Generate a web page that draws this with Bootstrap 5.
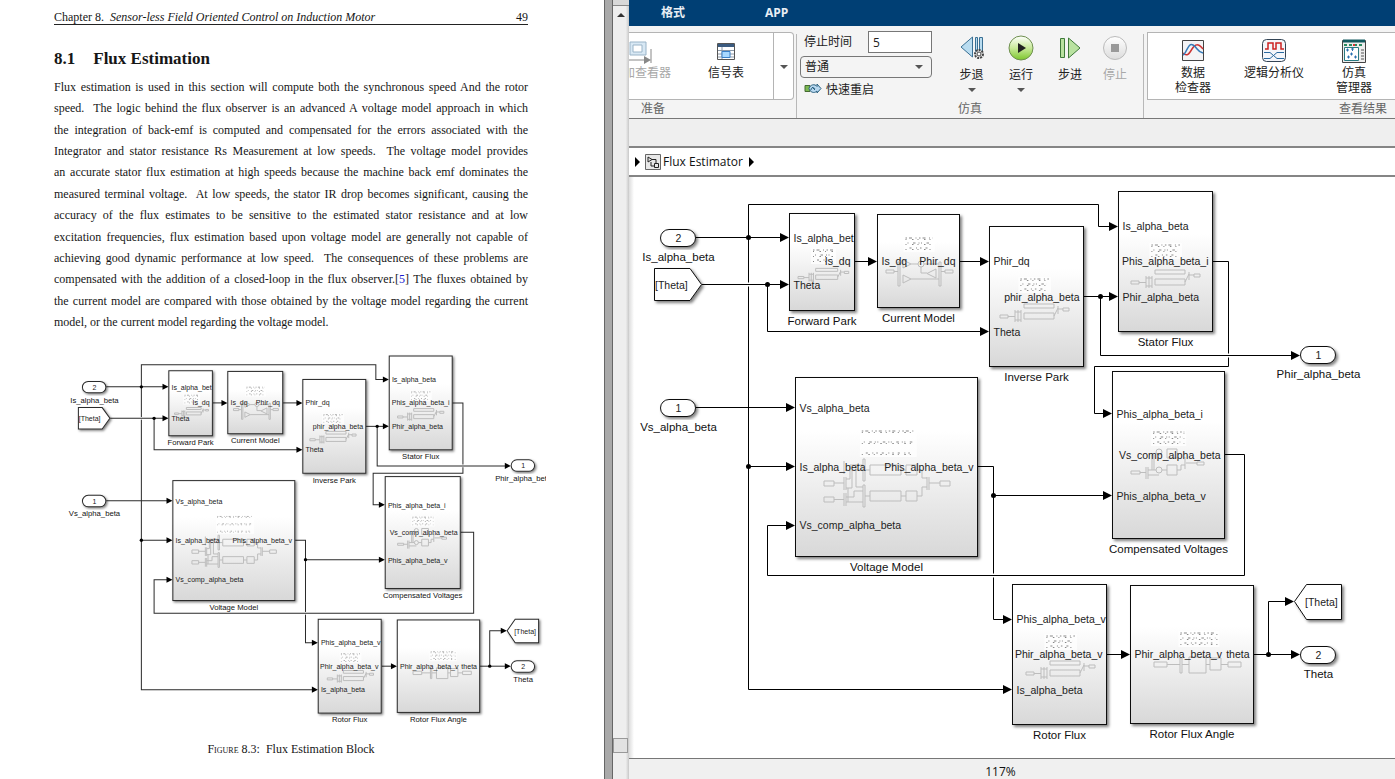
<!DOCTYPE html>
<html lang="zh-CN">
<head>
<meta charset="utf-8">
<meta name="viewport" content="width=device-width, initial-scale=1">
<title>Flux Estimator</title>
<link rel="stylesheet" href="https://cdn.jsdelivr.net/npm/bootstrap@5.3.0/dist/css/bootstrap.min.css">
<style>
  body { font-family: "Open Sans", "Noto Sans CJK SC", sans-serif; font-size: 12px; line-height: 16px; color: #222; background: #fff; }
  .split { display: grid; grid-template-columns: 604fr 791fr; height: 100vh; }
  .pane { min-width: 0; }

  /* document pane */
  .paper { font-family: "Liberation Serif", serif; color: #161616; min-width: 0; }
  .paper-text { padding: 10px 76px 0 54px; }
  .running-head { font-size: 12px; line-height: 14px; border-bottom: 1px solid #222; }
  .paper h1 { font-size: 17px; line-height: 20px; font-weight: 700; margin: 24px 0 8px; gap: 18px; }
  .prose { font-size: 12px; line-height: 1.78; }
  .prose span { display: block; text-align: justify; text-align-last: justify; white-space: nowrap; }
  .prose span:last-child { text-align-last: left; }
  .prose a { color: #1a1ad0; text-decoration: none; }
  .paper figure { padding: 20px 58px 0 66px; }
  .paper figcaption { font-size: 12px; line-height: 16px; margin: 14px 30px 0 0; text-align: center; }
  .caps { font-variant: small-caps; }
  .gutter { width: 8px; background: #a9a9a9; border-left: 1px solid #666; }
  .scroller { width: 17px; background: linear-gradient(90deg, #eee 80%, #c8c8c8); border-left: 1px solid #666; }
  .scroll-cap { height: 6px; background: #d8d8d8; border-bottom: 1px solid #888; }
  .scroll-thumb { height: 15px; margin: 0 1px 26px 0; background: #e2e2e2; border: 1px solid #999; }

  /* model window */
  .tabbar { height: 26px; background: #003f74; }
  .tabbar a { color: #e8eef4; font-weight: 700; text-decoration: none; }
  .ribbon { height: 93px; background: #f4f4f4; border-bottom: 1px solid #777; }
  .gallery { height: 69px; margin-top: 6px; background: #fff; border: 1px solid #b4b4b4; }
  .gallery-left { width: 165px; margin-right: 2px; border-left: 0; border-radius: 0 4px 4px 0; }
  .group-rule { border-left: 1px solid #b8b8b8; margin-top: 8px; }
  .sim-group { width: 346px; }
  .sim-body { height: 75px; }
  .sim-form { width: 139px; padding: 5px 4px 0 3px; gap: 3px; }
  .sim-tools { padding: 6px 0 0 11px; }
  .view-group { min-width: 0; padding-left: 3px; }
  .tool { border: 0; background: none; padding: 0; color: #222; line-height: 15px; display: flex; flex-direction: column; align-items: center; white-space: nowrap; }
  .tool:disabled { color: #a8a8a8; }
  .tool svg { display: block; }
  .group-name { color: #666; line-height: 18px; }
  .stop-time { width: 64px; height: 22px; border: 1px solid #777; padding: 0 4px; background: #fff; color: #222; }
  .mode { width: 132px; height: 22px; border: 1px solid #777; border-radius: 4px; padding: 0 4px; color: #222; appearance: none;
    background: #f4f4f4 url("data:image/svg+xml,%3Csvg xmlns='http://www.w3.org/2000/svg' width='8' height='4'%3E%3Cpath d='M0 0h8l-4 4z' fill='%23555'/%3E%3C/svg%3E") no-repeat right 8px center; }
  .drop-cell { width: 20px; border: 0; border-left: 1px solid #b4b4b4; background: none; padding: 0; }
  .substrip { height: 27px; background: #efefef; }
  .crumbs { height: 31px; border-top: 2px solid #858585; border-bottom: 2px solid #858585; background: #fff; }
  .crumbs a { color: #111; text-decoration: none; padding: 0 4px 0 2px; }
  .canvas-area { background: linear-gradient(90deg, #ddd, #fff 5px); min-height: 0; }
  .statusbar { height: 21px; border-top: 1px solid #777; background: #f0f0f0; padding-left: 46.5%; line-height: 26px; color: #111; }

  /* block diagram */
  .diagram { display: block; width: 100%; font-family: "Liberation Sans", sans-serif; }
  .diagram .wire { fill: none; stroke: #000; stroke-width: 2; }
  .diagram .shell { stroke: #111; stroke-width: 2; filter: url(#cast); }
  .diagram .port-name { font-size: 21px; fill: #222; }
  .diagram .block-name { font-size: 23px; fill: #111; text-anchor: middle; }
  .diagram .ghost { fill: none; stroke: #bdbdbd; stroke-width: 1; }
  .diagram .speck { fill: none; stroke: #888; stroke-width: 2; }
  .paper .diagram .wire, .paper .diagram .shell { stroke: #2b2b2b; stroke-width: 3; }
</style>
</head>
<body class="overflow-hidden">
<svg width="0" height="0" class="position-absolute" aria-hidden="true">
  <defs>
    <linearGradient id="face" x1="0" y1="0" x2="0" y2="1"><stop offset=".3" stop-color="#fff"/><stop offset="1" stop-color="#d8d8d8"/></linearGradient>
    <linearGradient id="run" x1="0" y1="0" x2="0" y2="1"><stop offset="0" stop-color="#fff"/><stop offset=".5" stop-color="#c9ea9a"/><stop offset="1" stop-color="#7cc62c"/></linearGradient>
    <linearGradient id="off" x1="0" y1="0" x2="0" y2="1"><stop offset="0" stop-color="#fff"/><stop offset="1" stop-color="#dcdcdc"/></linearGradient>
    <filter id="cast" x="-10%" y="-10%" width="125%" height="130%"><feDropShadow dx="4" dy="4" stdDeviation="3" flood-color="#000" flood-opacity=".5"/></filter>
  </defs>
</svg>

<main class="split">
  <section class="pane d-flex overflow-hidden">
    <article class="paper flex-grow-1">
      <div class="paper-text">
        <header class="running-head d-flex justify-content-between"><span>Chapter 8.&ensp;<i>Sensor-less Field Oriented Control on Induction Motor</i></span><span>49</span></header>
        <h1 class="d-flex"><span>8.1</span><span>Flux Estimation</span></h1>
        <p class="prose mb-0">
          <span>Flux estimation is used in this section will compute both the synchronous speed And the rotor</span>
          <span>speed.&nbsp; The logic behind the flux observer is an advanced A voltage model approach in which</span>
          <span>the integration of back-emf is computed and compensated for the errors associated with the</span>
          <span>Integrator and stator resistance Rs Measurement at low speeds.&nbsp; The voltage model provides</span>
          <span>an accurate stator flux estimation at high speeds because the machine back emf dominates the</span>
          <span>measured terminal voltage.&nbsp; At low speeds, the stator IR drop becomes significant, causing the</span>
          <span>accuracy of the flux estimates to be sensitive to the estimated stator resistance and at low</span>
          <span>excitation frequencies, flux estimation based upon voltage model are generally not capable of</span>
          <span>achieving good dynamic performance at low speed.&nbsp; The consequences of these problems are</span>
          <span>compensated with the addition of a closed-loop in the flux observer.[<a href="#ref5">5</a>] The fluxes obtained by</span>
          <span>the current model are compared with those obtained by the voltage model regarding the current</span>
          <span>model, or the current model regarding the voltage model.</span>
        </p>
      </div>
      <figure class="mb-0">
        <svg class="diagram" viewBox="1272 374 1433 1116" role="img" aria-label="Flux estimation block diagram"></svg>
        <figcaption><span class="caps">Figure</span> 8.3:&ensp;Flux Estimation Block</figcaption>
      </figure>
    </article>
  </section>

  <section class="pane d-flex">
    <div class="gutter flex-shrink-0"></div>
    <div class="scroller d-flex flex-column flex-shrink-0">
      <div class="scroll-cap"></div>
      <svg width="16" height="18" viewBox="0 0 16 18"><path d="M4 11l4-4 4 4z" fill="#333"/></svg>
      <div class="scroll-thumb mt-auto"></div>
    </div>

    <div class="pane d-flex flex-column flex-grow-1">
      <nav class="tabbar d-flex align-items-center flex-shrink-0"><a href="#format" class="ps-4 ms-2 pe-5">格式</a><a href="#app" class="ps-4 ms-2">APP</a></nav>

      <div class="ribbon d-flex flex-shrink-0 overflow-hidden">
        <div class="d-flex flex-column flex-shrink-0">
          <div class="gallery gallery-left d-flex">
            <div class="overflow-hidden d-flex justify-content-end" style="width:42px">
              <button class="tool pt-1" disabled>
                <svg width="30" height="28" viewBox="0 0 30 28"><path d="M4 5h16v13H4z" fill="#d8e8f4" stroke="#9ab4c8"/><path d="M7 8h9v7H7z" fill="#fff" stroke="#9ab4c8"/><path d="M2 18v5h18M25 12v14" fill="none" stroke="#888"/><path d="M18 19l7 4-7 4z" fill="#888"/></svg>
                <span>添加查看器</span>
              </button>
            </div>
            <button class="tool flex-grow-1 pt-1 ps-2"><svg width="18" height="28" viewBox="0 0 18 28"><path d="M.5 6.500h17v16H.5z" fill="#fff" stroke="#555"/><path d="M1 7h16v3H1z" fill="#3b5b80"/><path d="M1 13.500h16M1 17h16M1 20h16M5 10v12" stroke="#8a98a8"/><path d="M5 14.500h8v6H5z" fill="#a8d8ff" stroke="#3a80c8"/></svg><span>信号表</span></button>
            <button class="drop-cell" aria-label="更多"><svg width="8" height="4"><path d="M0 0h8l-4 4z" fill="#555"/></svg></button>
          </div>
          <span class="group-name ps-2 ms-1">准备</span>
        </div>

        <div class="group-rule flex-shrink-0"></div>
        <div class="sim-group d-flex flex-column flex-shrink-0">
          <div class="sim-body d-flex">
            <div class="sim-form d-flex flex-column">
              <div class="d-flex align-items-center justify-content-between flex-shrink-0"><label for="stop" class="ps-1">停止时间</label><input id="stop" class="stop-time" value="5"></div>
              <select class="mode flex-shrink-0" aria-label="仿真模式"><option>普通</option></select>
              <button class="tool flex-row gap-1 ps-1 flex-shrink-0"><svg width="18" height="16" viewBox="0 0 18 16"><path d="M1 4.500h5v6H1z" fill="#7cb850" stroke="#456a30"/><path d="M5 7.500c1-4 6-5 8-2V3l4 4.500L13 12v-2c-3 3-7 1-8-2.500z" fill="#b8d8f0" stroke="#2a6080"/><path d="M7 9c0-3 3-3 4-1M8 6l3 3" fill="none" stroke="#2a6080"/></svg>快速重启</button>
            </div>
            <div class="sim-tools d-flex">
              <button class="tool" style="width:49px"><svg width="28" height="35" viewBox="0 0 28 35"><path d="M14.500 5v20L3 15z" fill="#b9dcf0" stroke="#3a7094"/><path d="M17.500 5.500h2v17h-2zM21.500 5.500h3v14h-3z" fill="#b9dcf0" stroke="#3a7094"/><circle cx="21" cy="22" r="4" fill="#eee" stroke="#444" stroke-width="2" stroke-dasharray="2 1"/><circle cx="21" cy="22" r="2" fill="#fff" stroke="#444"/></svg><span>步退</span><svg width="8" height="12"><path d="M0 6h8l-4 4z" fill="#555"/></svg></button>
              <button class="tool" style="width:50px"><svg width="26" height="35" viewBox="0 0 26 35"><circle cx="13" cy="16" r="12" fill="url(#run)" stroke="#6f8f50"/><path d="M10 11v10l8-5z" fill="#222"/></svg><span>运行</span><svg width="8" height="12"><path d="M0 6h8l-4 4z" fill="#555"/></svg></button>
              <button class="tool" style="width:48px"><svg width="24" height="35" viewBox="0 0 24 35"><path d="M2.500 6.500h4v19h-4zM10.500 6v20L22 16z" fill="#b9e2a0" stroke="#3f7a3a"/></svg><span>步进</span></button>
              <button class="tool" style="width:42px" disabled><svg width="26" height="35" viewBox="0 0 26 35"><circle cx="13" cy="16" r="11.500" fill="url(#off)" stroke="#bbb"/><path d="M9 12h8v8H9z" fill="#999"/></svg><span>停止</span></button>
            </div>
          </div>
          <span class="group-name text-center">仿真</span>
        </div>

        <div class="group-rule flex-shrink-0"></div>
        <div class="view-group d-flex flex-column flex-grow-1">
          <div class="gallery border-end-0 d-flex">
            <button class="tool pt-1 flex-shrink-0" style="width:90px"><svg width="24" height="28" viewBox="0 0 24 28"><path d="M1.500 3.500h21v20h-21z" fill="#f4f4f6" stroke="#444"/><path d="M2 16c4 4 6 1 9-4s6-6 11 0" fill="none" stroke="#c33" stroke-width="1.500"/><path d="M2 18c4-2 5-13 10-10s4 7 10 8" fill="none" stroke="#357ab8" stroke-width="1.500"/></svg><span>数据<br>检查器</span></button>
            <button class="tool pt-1 flex-shrink-0" style="width:72px"><svg width="26" height="28" viewBox="0 0 26 28"><rect x="1.500" y="2.500" width="23" height="22" rx="4" fill="#f4f6fa" stroke="#345"/><path d="M4 12h3V6h5v6h3V6h5v6h3" fill="none" stroke="#c22" stroke-width="1.500"/><path d="M3 15.500h6l7 6h7M3 21.500h6l7-6h7" fill="none" stroke="#2a6aa0"/></svg><span>逻辑分析仪</span></button>
            <button class="tool pt-1 flex-shrink-0" style="width:88px"><svg width="26" height="28" viewBox="0 0 26 28"><path d="M1.500 3.500h23v22h-23z" fill="#eee" stroke="#444"/><path d="M2 4h22" stroke="#145a60" stroke-width="3"/><path d="M3 8h20" stroke="#2a8a60" stroke-width="2" stroke-dasharray="3 2"/><path d="M12 8h2" stroke="#d33" stroke-width="2"/><path d="M3.500 10.500h14v13h-14z" fill="#fff" stroke="#2a7a80"/><path d="M5 13h3M6.500 11.500v3M10 12h3M11.500 11v3M9 17h3M10.500 15.500v3M6 20h3M7.500 18.500v3M13 20h3M14.500 18.500v3" stroke="#2a70b0"/><path d="M20 13h3M20 16h3M20 19h3M20 22h3" stroke="#555"/></svg><span>仿真<br>管理器</span></button>
          </div>
          <span class="group-name text-end pe-2">查看结果</span>
        </div>
      </div>

      <div class="substrip flex-shrink-0"></div>
      <nav class="crumbs d-flex align-items-center flex-shrink-0 ps-1">
        <svg width="12" height="12"><path d="M2 1v10l5-5z"/></svg>
        <svg width="16" height="16" viewBox="0 0 16 16"><path d="M.5.5h15v15H.5z" fill="#e8e8e8" stroke="#666"/><path d="M3 3v5l4-2.500zM7 5.500h4v4M9.500 9.500h4v4h-4zM9.500 12H6V8" fill="none" stroke="#222"/></svg>
        <a href="#flux">Flux Estimator</a>
        <svg width="12" height="12"><path d="M2 1v10l5-5z"/></svg>
      </nav>
      <div class="canvas-area flex-grow-1 overflow-hidden">
        <svg class="diagram h-100" viewBox="1258 354 1532 1162" preserveAspectRatio="xMinYMin meet" role="img" aria-label="Flux Estimator model"></svg>
      </div>
      <footer class="statusbar flex-shrink-0">117%</footer>
    </div>
  </section>
</main>

<script src="https://cdn.jsdelivr.net/npm/bootstrap@5.3.0/dist/js/bootstrap.bundle.min.js"></script>
<script>
// One grid step of the model is two units of the drawing.
const u = n => n * 2;
const pts = a => a.map(p => u(p[0]) + ',' + u(p[1])).join(' ');

const blocks = [
  { name: 'Forward Park', box: [789.5, 213.5, 65, 97], left: [['Is_alpha_bet', 238], ['Theta', 285]], right: [['Is_dq', 261.5]], art: [798, 250, 50, 'bar'] },
  { name: 'Current Model', box: [877.5, 214.5, 82, 93], left: [['Is_dq', 261]], right: [['Phir_dq', 261]], art: [886, 238, 65, 'gain'] },
  { name: 'Inverse Park', box: [989.5, 226.5, 94, 140], left: [['Phir_dq', 261.5], ['Theta', 332]], right: [['phir_alpha_beta', 297]], art: [1000, 279, 68, 'bar'] },
  { name: 'Stator Flux', box: [1118.5, 191.5, 94, 140], left: [['Is_alpha_beta', 226.5], ['Phir_alpha_beta', 297]], right: [['Phis_alpha_beta_i', 261.5]], art: [1131, 245, 68, 'bar'] },
  { name: 'Compensated Voltages', box: [1112.5, 371.5, 112, 167], left: [['Phis_alpha_beta_i', 414.5], ['Phis_alpha_beta_v', 496.5]], right: [['Vs_comp_alpha_beta', 455.5]], art: [1131, 432, 74, 'sum'] },
  { name: 'Voltage Model', box: [795.5, 377.5, 182, 179], left: [['Vs_alpha_beta', 408.5], ['Is_alpha_beta', 467.5], ['Vs_comp_alpha_beta', 525.5]], right: [['Phis_alpha_beta_v', 467.5]], art: [824, 431, 126, 'model'] },
  { name: 'Rotor Flux', box: [1012.5, 584.5, 94, 140], left: [['Phis_alpha_beta_v', 619.5], ['Is_alpha_beta', 690]], right: [['Phir_alpha_beta_v', 654.5]], art: [1026, 636, 68, 'bar'] },
  { name: 'Rotor Flux Angle', box: [1130.5, 585.5, 123, 138], left: [['Phir_alpha_beta_v', 654.5]], right: [['theta', 654.5]], art: [1154, 633, 88, 'angle'] }
];

const ports = [
  { n: 2, at: [678.5, 238], name: 'Is_alpha_beta' }, { n: 1, at: [678.5, 408], name: 'Vs_alpha_beta' },
  { n: 1, at: [1318.5, 355], name: 'Phir_alpha_beta' }, { n: 2, at: [1318.5, 655], name: 'Theta' }
];

// each entry: the corner points, then where another wire is crossed with a small break
const wires = [
  [[[748.5, 237.5], [748.5, 204.5], [1098.5, 204.5], [1098.5, 226.5], [1118, 226.5]]],
  [[[748.5, 237.5], [748.5, 689.5], [1012, 689.5]]],
  [[[1212.5, 261.5], [1228.5, 261.5], [1228.5, 366.5], [1094.5, 366.5], [1094.5, 413.5], [1112, 413.5]]],
  [[[993.5, 495.5], [993.5, 619.5], [1012, 619.5]]],
  [[[696, 237.5], [789, 237.5]]],
  [[[702, 284.5], [789, 284.5]], [748.5, 284.5]],
  [[[767.5, 284.5], [767.5, 331.5], [989, 331.5]]],
  [[[855, 261.5], [877, 261.5]]],
  [[[960, 261.5], [989, 261.5]]],
  [[[1083.5, 296.5], [1118, 296.5]]],
  [[[1100.5, 296.5], [1100.5, 355.5], [1300, 355.5]], [1228.5, 355.5]],
  [[[696, 407.5], [795, 407.5]]],
  [[[748.5, 466.5], [795, 466.5]]],
  [[[978, 466.5], [993.5, 466.5], [993.5, 495.5], [1112, 495.5]]],
  [[[1224.5, 454.5], [1244.5, 454.5], [1244.5, 575.5], [767.5, 575.5], [767.5, 525.5], [795, 525.5]], [993.5, 575.5]],
  [[[1107, 654.5], [1130, 654.5]]],
  [[[1253.5, 654.5], [1300, 654.5]]],
  [[[1268.5, 654.5], [1268.5, 601.5], [1294, 601.5]]]
];
const dots = [[748.5, 237.5], [767.5, 284.5], [1100.5, 296.5], [748.5, 466.5], [993.5, 495.5], [1268.5, 654.5]];

const ghosts = {
  bar: 'M0 36h8v3h-8zM8 37.500h7M15 31v12M18 31v12M21 31v12M15 33h6M15 41h6M24 34h30v6h-30zM54 37l4-8M58 27v8M58 30h5M63 29h6v3h-6zM24 25h30v4h-30z',
  gain: 'M0 32h8v3h-8zM8 33.500h4M12 24h2v24h-2zM17 22v8l8-4zM25 26h7M35 26m-3 0a3 3 0 106 0a3 3 0 10-6 0M17 37v8l8-4zM25 41h28M53 24h2v24h-2zM50 31v9l-9-4.500zM41 35h-6v-6M38 26h15M55 33.500h4M59 32h8v3h-8z',
  sum: 'M0 39h9v3h-9zM9 40.500h6M15 35v12M17 35v12M17 38h8M28 38m-3 0a3 3 0 106 0a3 3 0 10-6 0M17 43h11M31 38h5M36 33h10v10h-10zM46 38h4v-5h4M54 25v12M55 31h11M66 30h7v3h-7zM36 17h10v9h-10zM28 20m-3 0a3 3 0 106 0a3 3 0 10-6 0M21 38v-15M23 38v-15',
  model: 'M0 50h10v5h-10zM10 52h10M0 66h10v5h-10zM10 68.500h10M20 46v13M22 46v13M20 62v13M22 62v13M20 30v13M39 28v22h2v-22zM39 54v22h2v-22zM46 34h31v10h-31zM46 60h31v10h-31zM82 34h11v10h-11zM82 60h11v10h-11zM41 39h5M77 39h5M41 65h5M77 65h5M22 48h4v-14h13M22 57h6v-18h11M22 66h8v-6h9M22 71h17M24 57v14M32 33v23h7M93 39h5v8h5M93 65h5v-9h5M103 46v13M105 46v13M105 52h11M116 50h10v5h-10z',
  angle: 'M0 29h13v5h-13zM13 31.500h13M26 25v15h2v-15zM28 31.500h7M35 24h17v16h-17zM52 31.500h4M56 25h11v12h-11zM67 31.500h7M74 29h13v5h-13z'
};

const say = (cls, x, y, t, extra = '') => `<text class="${cls}" x="${u(x)}" y="${u(y)}" ${extra}>${t}</text>`;

function preview([x, y, w, kind]) {
  const zoom = kind === 'bar' ? w / 68 : 1;
  const a = w * .3, b = w * .72, step = kind === 'model' ? 11 : 5;
  const rows = ['3 4 6 7 2 5', '2 9 5 6 2 3', '4 9 2 6 3 8'].map((dash, i) =>
    `<path class="speck" stroke-dasharray="${dash}" d="M${u(a + i * 2)} ${u(i * step)}L${u(b - i * 2)} ${u(i * step)}"/>
     <path class="speck" stroke-dasharray="2 11 3 8" d="M${u(a)} ${u(i * step + 1.5)}L${u(b)} ${u(i * step + 1.5)}"/>`).join('');
  return `<g transform="translate(${u(x)} ${u(y)})"><rect x="${u(a - 2)}" y="-4" width="${u(b - a + 4)}" height="${u(step * 2 + 6)}" fill="#fff" opacity=".7"/>${rows}
    <path class="ghost" transform="scale(${u(zoom)})" vector-effect="non-scaling-stroke" d="${ghosts[kind]}"/></g>`;
}

function drawBlock(b, id) {
  const [x, y, w, h] = b.box;
  return `<rect class="shell" fill="url(#face)" x="${u(x)}" y="${u(y)}" width="${u(w)}" height="${u(h)}"/>`
    + `<clipPath id="${id}"><rect x="${u(x)}" y="${u(y)}" width="${u(w)}" height="${u(h)}"/></clipPath>`
    + preview(b.art) + `<g clip-path="url(#${id})">`
    + b.left.map(p => say('port-name', x + 4, p[1] + 3.5, p[0])).join('')
    + b.right.map(p => say('port-name', x + w - 4, p[1] + 3.5, p[0], 'text-anchor="end"')).join('')
    + '</g>' + say('block-name', x + w / 2, y + h + 14, b.name);
}

function drawWire([path, cross]) {
  const [ex, ey] = path[path.length - 1];
  const gap = cross ? `<rect x="${u(cross[0] - 2)}" y="${u(cross[1] - 2)}" width="8" height="8" fill="#fff"/>` : '';
  const line = path.slice(0, -1).concat([[ex - 4, ey]]);
  return gap + `<polyline class="wire" points="${pts(line)}"/><polygon points="${pts([[ex - 9, ey - 4.5], [ex, ey], [ex - 9, ey + 4.5]])}"/>`;
}

document.querySelectorAll('.diagram').forEach((svg, k) => {
  svg.innerHTML = wires.map(drawWire).join('')
    + dots.map(d => `<circle cx="${u(d[0])}" cy="${u(d[1])}" r="5"/>`).join('')
    + blocks.map((b, i) => drawBlock(b, `clip${k}-${i}`)).join('')
    + ports.map(p => `<rect class="shell" fill="#fff" x="${u(p.at[0] - 18)}" y="${u(p.at[1] - 8.5)}" width="70" height="34" rx="17"/>`
        + say('port-name', p.at[0], p.at[1] + 4, p.n, 'text-anchor="middle"') + say('block-name', p.at[0], p.at[1] + 23, p.name)).join('')
    + `<polygon class="shell" fill="#fff" points="${pts([[654.5, 268.5], [690, 268.5], [701.5, 284.5], [690, 300.5], [654.5, 300.5]])}"/>` + say('port-name', 655, 289, '[Theta]')
    + `<polygon class="shell" fill="#fff" points="${pts([[1294.5, 601.5], [1306.5, 584.5], [1341.5, 584.5], [1341.5, 619.5], [1306.5, 619.5]])}"/>` + say('port-name', 1305, 606, '[Theta]');
});
</script>
</body>
</html>
